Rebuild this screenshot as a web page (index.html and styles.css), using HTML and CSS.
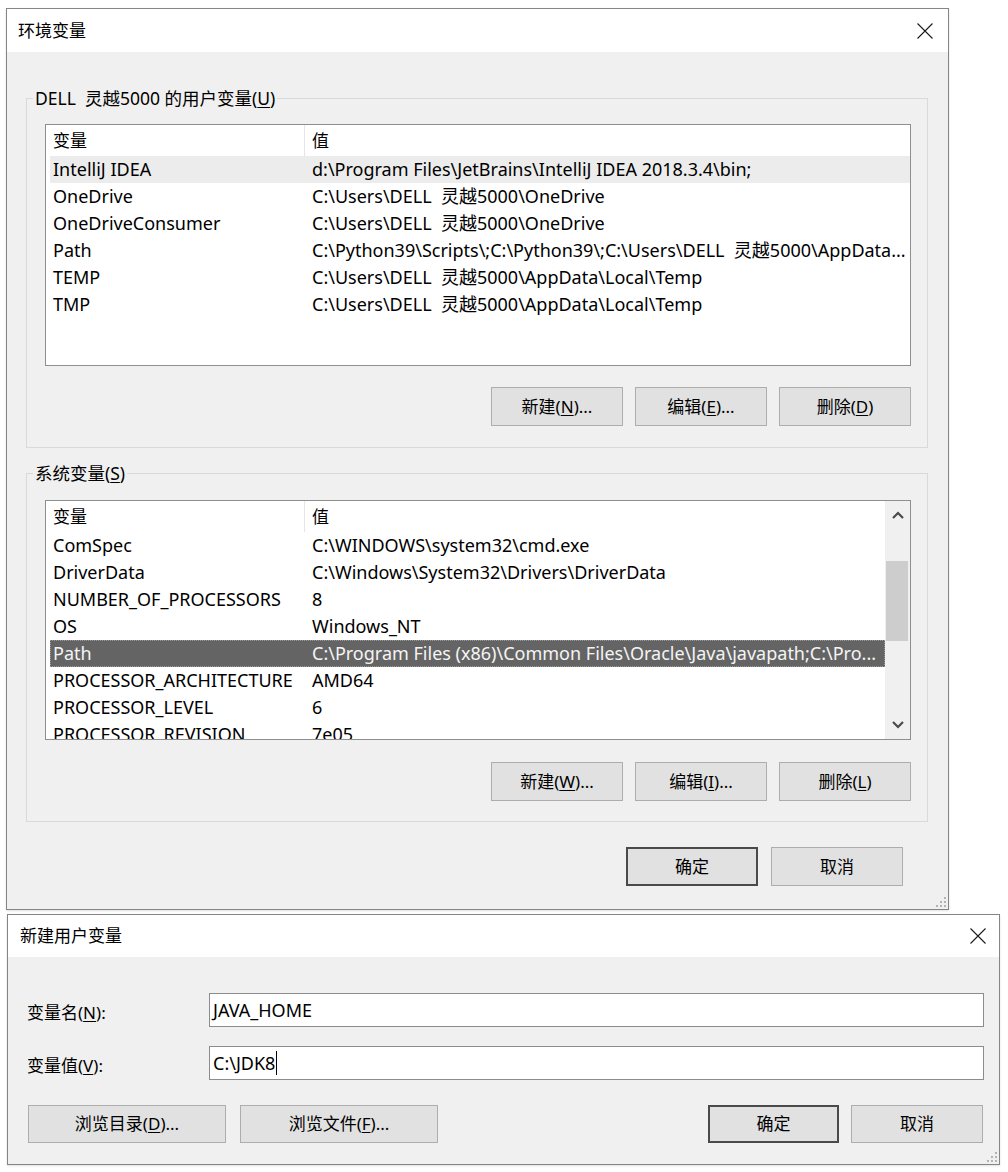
FILE: index.html
```html
<!DOCTYPE html>
<html lang="zh-CN">
<head>
<meta charset="utf-8">
<title>环境变量</title>
<link rel="stylesheet" href="styles.css">
</head>
<body>
<div class="win win-env">
  <div class="titlebar">
    <span class="title">环境变量</span>
    <svg class="close" width="16" height="16" viewBox="0 0 16 16"><path d="M0.5 0.5 L15.5 15.5 M15.5 0.5 L0.5 15.5" stroke="#1a1a1a" stroke-width="1.1" fill="none"/></svg>
  </div>
  <div class="body">
    <fieldset class="group group-user">
      <legend>DELL&nbsp;&nbsp;灵越5000 的用户变量(<u>U</u>)</legend>
      <div class="list list-user">
        <div class="rows">
          <div class="row head"><span class="c1">变量</span><span class="c2">值</span></div>
          <div class="row hover"><span class="c1">IntelliJ IDEA</span><span class="c2">d:\Program Files\JetBrains\IntelliJ IDEA 2018.3.4\bin;</span></div>
          <div class="row"><span class="c1">OneDrive</span><span class="c2">C:\Users\DELL&nbsp;&nbsp;灵越5000\OneDrive</span></div>
          <div class="row"><span class="c1">OneDriveConsumer</span><span class="c2">C:\Users\DELL&nbsp;&nbsp;灵越5000\OneDrive</span></div>
          <div class="row"><span class="c1">Path</span><span class="c2">C:\Python39\Scripts\;C:\Python39\;C:\Users\DELL&nbsp;&nbsp;灵越5000\AppData...</span></div>
          <div class="row"><span class="c1">TEMP</span><span class="c2">C:\Users\DELL&nbsp;&nbsp;灵越5000\AppData\Local\Temp</span></div>
          <div class="row"><span class="c1">TMP</span><span class="c2">C:\Users\DELL&nbsp;&nbsp;灵越5000\AppData\Local\Temp</span></div>
        </div>
      </div>
      <div class="btnrow">
        <button class="btn">新建(<u>N</u>)...</button>
        <button class="btn">编辑(<u>E</u>)...</button>
        <button class="btn">删除(<u>D</u>)</button>
      </div>
    </fieldset>

    <fieldset class="group group-sys">
      <legend>系统变量(<u>S</u>)</legend>
      <div class="list list-sys">
        <div class="rows">
          <div class="row head"><span class="c1">变量</span><span class="c2">值</span></div>
          <div class="row"><span class="c1">ComSpec</span><span class="c2">C:\WINDOWS\system32\cmd.exe</span></div>
          <div class="row"><span class="c1">DriverData</span><span class="c2">C:\Windows\System32\Drivers\DriverData</span></div>
          <div class="row"><span class="c1">NUMBER_OF_PROCESSORS</span><span class="c2">8</span></div>
          <div class="row"><span class="c1">OS</span><span class="c2">Windows_NT</span></div>
          <div class="row selected"><span class="c1">Path</span><span class="c2">C:\Program Files (x86)\Common Files\Oracle\Java\javapath;C:\Pro...</span></div>
          <div class="row"><span class="c1">PROCESSOR_ARCHITECTURE</span><span class="c2">AMD64</span></div>
          <div class="row"><span class="c1">PROCESSOR_LEVEL</span><span class="c2">6</span></div>
          <div class="row"><span class="c1">PROCESSOR_REVISION</span><span class="c2">7e05</span></div>
        </div>
        <div class="scrollbar">
          <div class="sb-btn"><svg width="12" height="8" viewBox="0 0 12 8"><path d="M1 7 L6 2 L11 7" stroke="#4a4a4a" stroke-width="2.2" fill="none"/></svg></div>
          <div class="sb-track"><div class="sb-thumb"></div></div>
          <div class="sb-btn"><svg width="12" height="8" viewBox="0 0 12 8"><path d="M1 1 L6 6 L11 1" stroke="#4a4a4a" stroke-width="2.2" fill="none"/></svg></div>
        </div>
      </div>
      <div class="btnrow">
        <button class="btn">新建(<u>W</u>)...</button>
        <button class="btn">编辑(<u>I</u>)...</button>
        <button class="btn">删除(<u>L</u>)</button>
      </div>
    </fieldset>

    <div class="footer">
      <button class="btn default">确定</button>
      <button class="btn">取消</button>
    </div>
    <svg class="grip" width="10" height="10" viewBox="0 0 10 10"><g fill="#b4b4b4"><rect x="8" y="0" width="2" height="2"/><rect x="4" y="4" width="2" height="2"/><rect x="8" y="4" width="2" height="2"/><rect x="0" y="8" width="2" height="2"/><rect x="4" y="8" width="2" height="2"/><rect x="8" y="8" width="2" height="2"/></g></svg>
  </div>
</div>

<div class="win win-new">
  <div class="titlebar">
    <span class="title">新建用户变量</span>
    <svg class="close" width="16" height="16" viewBox="0 0 16 16"><path d="M0.5 0.5 L15.5 15.5 M15.5 0.5 L0.5 15.5" stroke="#1a1a1a" stroke-width="1.1" fill="none"/></svg>
  </div>
  <div class="body body-new">
    <div class="form">
      <label class="flabel">变量名(<u>N</u>):</label>
      <div class="input">JAVA_HOME</div>
      <label class="flabel">变量值(<u>V</u>):</label>
      <div class="input">C:\JDK8<span class="caret"></span></div>
    </div>
    <div class="actions">
      <div class="left">
        <button class="btn wide">浏览目录(<u>D</u>)...</button>
        <button class="btn wide">浏览文件(<u>F</u>)...</button>
      </div>
      <div class="right">
        <button class="btn default">确定</button>
        <button class="btn">取消</button>
      </div>
    </div>
    <svg class="grip" width="10" height="10" viewBox="0 0 10 10"><g fill="#b4b4b4"><rect x="8" y="0" width="2" height="2"/><rect x="4" y="4" width="2" height="2"/><rect x="8" y="4" width="2" height="2"/><rect x="0" y="8" width="2" height="2"/><rect x="4" y="8" width="2" height="2"/><rect x="8" y="8" width="2" height="2"/></g></svg>
  </div>
</div>
</body>
</html>
```

FILE: styles.css
```css
* { box-sizing: border-box; }

html, body {
  margin: 0;
  padding: 0;
  background: #ffffff;
}

body {
  font-family: "Noto Sans", "Noto Sans CJK SC", sans-serif;
  font-size: 17px;
  color: #111;
  width: 1008px;
  height: 1172px;
  overflow: hidden;
}

u { text-decoration: underline; text-underline-offset: 2px; text-decoration-thickness: 1px; }

.win {
  border: 1px solid #858585;
  background: #f0f0f0;
  display: flex;
  flex-direction: column;
  box-shadow: 0 1px 2px rgba(0,0,0,0.12);
}

.win-env {
  margin: 8px 0 0 6px;
  width: 943px;
  height: 902px;
}

.titlebar {
  background: #ffffff;
  display: flex;
  align-items: center;
  justify-content: space-between;
  flex: none;
}

.win-env .titlebar {
  height: 43px;
  padding: 0 15px 0 11px;
}

.title {
  font-size: 17px;
  line-height: 20px;
  color: #000;
}

.close { display: block; }

.body {
  flex: 1;
  position: relative;
  display: flex;
  flex-direction: column;
}

.group {
  margin: 0 0 0 19px;
  width: 902px;
  padding: 0 0 0 18px;
  border: 1px solid #d9d9d9;
  min-width: 0;
}

.group legend {
  margin-left: -12px;
  padding: 0 2px;
  font-size: 17.5px;
  line-height: 20px;
  color: #000;
}

.group-user {
  margin-top: 36px;
  padding-bottom: 21px;
}

.group-sys {
  margin-top: 15px;
  padding-bottom: 20px;
}

.list {
  width: 866px;
  border: 1px solid #8f8f8f;
  background: #fff;
  display: flex;
  overflow: hidden;
}

.list-user {
  margin-top: 16px;
  height: 242px;
}

.list-sys {
  margin-top: 17px;
  height: 240px;
}

.rows {
  flex: 1;
  min-width: 0;
  overflow: hidden;
}

.row {
  display: flex;
  height: 27px;
  align-items: center;
  margin-left: 4px;
  white-space: nowrap;
  line-height: 27px;
  font-size: 18px;
  color: #000;
}

.row.head {
  height: 31px;
  line-height: 31px;
  font-size: 17px;
}

.row .c1 {
  flex: none;
  width: 254px;
  padding-left: 3px;
  overflow: hidden;
}

.row .c2 {
  flex: 1;
  min-width: 0;
  padding-left: 8px;
  overflow: hidden;
}

.row.head .c2 {
  border-left: 1px solid #e5e5e5;
  padding-left: 7px;
}

.row.hover {
  background: #ececec;
}

.row.selected {
  background: #646464;
  color: #f4f4f4;
  outline: 1px dotted #9a9a9a;
  outline-offset: -1px;
}

.scrollbar {
  flex: none;
  width: 25px;
  background: #f0f0f0;
  display: flex;
  flex-direction: column;
}

.sb-btn {
  height: 28px;
  display: flex;
  align-items: center;
  justify-content: center;
  flex: none;
}

.sb-track {
  flex: 1;
  padding: 32px 2px 0 1px;
}

.sb-thumb {
  height: 80px;
  background: #cdcdcd;
}

.btnrow {
  width: 866px;
  display: flex;
  justify-content: flex-end;
  gap: 12px;
  margin-top: 21px;
}

.group-sys .btnrow { margin-top: 22px; }

.btn {
  width: 132px;
  height: 39px;
  background: #e1e1e1;
  border: 1px solid #adadad;
  font-family: "Noto Sans", "Noto Sans CJK SC", sans-serif;
  font-size: 17px;
  color: #000;
  padding: 0;
  margin: 0;
  line-height: 20px;
}

.btn.default {
  border: 2px solid #4a4a4a;
}

.footer {
  display: flex;
  justify-content: flex-end;
  gap: 13px;
  margin-top: 25px;
  padding-right: 45px;
}

.grip {
  position: absolute;
  right: 2px;
  bottom: 2px;
}

/* New user variable dialog */
.win-new {
  margin: 4px 0 0 7px;
  width: 993px;
  height: 251px;
}

.win-new .titlebar {
  height: 42px;
  padding: 0 13px 0 12px;
}

.body-new {
  padding: 36px 15px 0 19px;
}

.form {
  display: grid;
  grid-template-columns: 182px 1fr;
  row-gap: 19px;
  align-items: center;
}

.flabel {
  font-size: 17px;
  color: #000;
  padding-top: 3px;
}

.input {
  height: 34px;
  border: 1px solid #8c8c8c;
  background: #fff;
  padding: 0 3px;
  line-height: 30px;
  font-size: 18px;
  color: #000;
  display: flex;
  align-items: center;
  white-space: nowrap;
}

.caret {
  display: inline-block;
  width: 1px;
  height: 24px;
  background: #000;
  margin-left: 1px;
}

.actions {
  display: flex;
  justify-content: space-between;
  margin-top: 25px;
  padding-left: 1px;
  padding-right: 1px;
}

.actions .left, .actions .right {
  display: flex;
  gap: 14px;
}

.actions .right { gap: 12px; }

.btn.wide { width: 198px; }

.win-new .btn { height: 38px; }
.win-new .btn.default { width: 131px; }
```
